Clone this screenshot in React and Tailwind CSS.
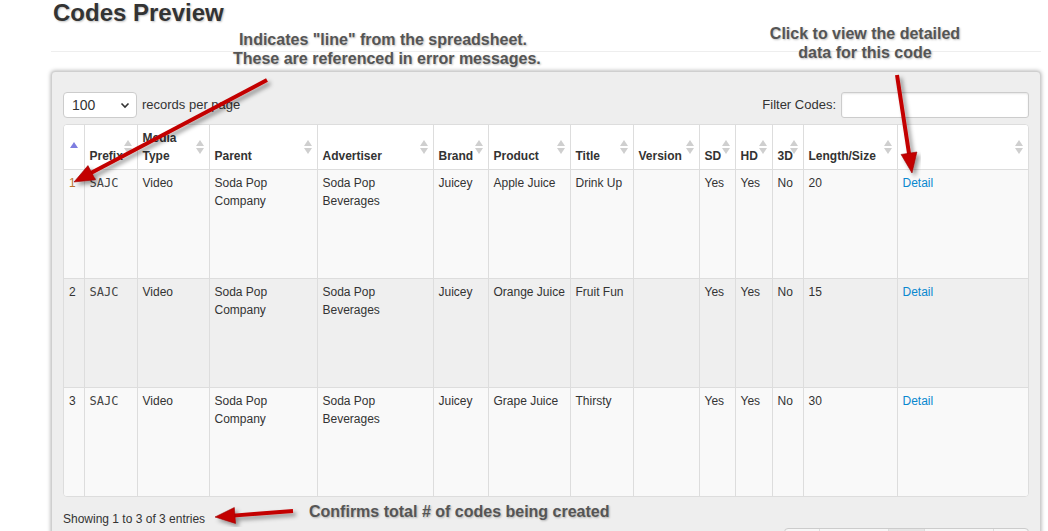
import React from "react";

// Column layout taken from the reference table
const columns = [
  { label: "", width: "w-[20px]" },
  { label: "Prefix", width: "w-[53px]" },
  { label: ["Media", "Type"], width: "w-[72px]" },
  { label: "Parent", width: "w-[108px]" },
  { label: "Advertiser", width: "w-[116px]" },
  { label: "Brand", width: "w-[55px]" },
  { label: "Product", width: "w-[82px]" },
  { label: "Title", width: "w-[63px]" },
  { label: "Version", width: "w-[66px]" },
  { label: "SD", width: "w-[36px]" },
  { label: "HD", width: "w-[37px]" },
  { label: "3D", width: "w-[31px]" },
  { label: "Length/Size", width: "w-[94px]" },
  { label: "", width: "w-[131px]" },
];

const rows = [
  { line: "1", product: "Apple Juice", title: "Drink Up", length: "20", bg: "bg-[#f9f9f9]" },
  { line: "2", product: "Orange Juice", title: "Fruit Fun", length: "15", bg: "bg-[#efefef]" },
  { line: "3", product: "Grape Juice", title: "Thirsty", length: "30", bg: "bg-[#f9f9f9]" },
];

const SortIcon = () => (
  <svg width="8" height="14" viewBox="0 0 8 14" className="absolute right-[5px] top-[15px]">
    <polygon points="0,6 4,0 8,6" fill="#cfcfcf" />
    <polygon points="0,8 8,8 4,14" fill="#cfcfcf" />
  </svg>
);

// red callout arrow, tip at (x2, y2)
const Arrow = ({ x1, y1, x2, y2 }) => {
  const dx = x2 - x1;
  const dy = y2 - y1;
  const len = Math.sqrt(dx * dx + dy * dy);
  const ux = dx / len;
  const uy = dy / len;
  const headLen = 20;
  const half = 8;
  const bx = x2 - ux * headLen;
  const by = y2 - uy * headLen;
  const px = -uy * half;
  const py = ux * half;
  return (
    <g filter="url(#arrowShadow)">
      <line x1={x1} y1={y1} x2={bx + ux * 2} y2={by + uy * 2} stroke="#c30000" strokeWidth="4" />
      <polygon
        points={`${x2},${y2} ${bx + px},${by + py} ${bx - px},${by - py}`}
        fill="#c30000"
        stroke="#9a0000"
        strokeWidth="0.6"
      />
    </g>
  );
};

const Callout = ({ className, lines }) => (
  <div
    className={`absolute text-center font-bold text-[16px] leading-[19px] text-[#555] whitespace-nowrap [text-shadow:1px_1px_2px_rgba(0,0,0,0.25)] ${className}`}
  >
    {lines.map((l) => (
      <div key={l}>{l}</div>
    ))}
  </div>
);

export default function App() {
  return (
    <div className="relative w-[1048px] h-[531px] overflow-hidden bg-white font-['Liberation_Sans',Arial,sans-serif] text-[#333]">
      <div className="ml-[51px] w-[990px]">
        <h3 className="pl-[2px] text-[24px] leading-[26px] font-bold text-[#333] [text-shadow:1px_1px_2px_rgba(0,0,0,0.25)]">
          Codes Preview
        </h3>
        <div className="mt-[25px] h-px bg-[#eeeeee]" />

        <div className="mt-[19px] rounded-[4px] border border-[#cfcfcf] bg-[#eeeeee] pt-[20px] px-[11px] shadow-[0_0_4px_rgba(0,0,0,0.35)]">
          {/* controls */}
          <div className="flex items-center justify-between h-[26px]">
            <div className="flex items-center">
              <div className="flex items-center justify-between w-[74px] h-[26px] rounded-[4px] border border-[#cccccc] bg-white pl-[8px] pr-[6px] text-[14px]">
                <span>100</span>
                <svg width="10" height="10" viewBox="0 0 10 10">
                  <path d="M1.5 3.5 L5 7 L8.5 3.5" fill="none" stroke="#333" strokeWidth="1.6" />
                </svg>
              </div>
              <span className="ml-[5px] text-[13px]">records per page</span>
            </div>
            <div className="flex items-center">
              <span className="text-[13px] mr-[5px]">Filter Codes:</span>
              <div className="w-[188px] h-[26px] rounded-[3px] border border-[#cccccc] bg-white shadow-[inset_0_1px_2px_rgba(0,0,0,0.1)]" />
            </div>
          </div>

          {/* table */}
          <div className="mt-[6px] rounded-[4px] border border-[#dddddd] overflow-hidden bg-white">
            <table className="w-full table-fixed border-collapse text-[12px] leading-[18px]">
              <colgroup>
                {columns.map((c, i) => (
                  <col key={i} className={c.width} />
                ))}
              </colgroup>
              <thead>
                <tr className="h-[44px] bg-white">
                  {columns.map((c, i) => (
                    <th
                      key={i}
                      className="relative align-bottom text-left font-bold px-[5px] pb-[4px] border-l border-[#dddddd] first:border-l-0"
                    >
                      {i === 0 ? (
                        <svg width="8" height="6" viewBox="0 0 8 6" className="absolute left-[6px] top-[17px]">
                          <polygon points="0,6 4,0 8,6" fill="#7d7de0" />
                        </svg>
                      ) : (
                        <>
                          {Array.isArray(c.label) ? (
                            <>
                              {c.label[0]}
                              <br />
                              {c.label[1]}
                            </>
                          ) : (
                            c.label
                          )}
                          <SortIcon />
                        </>
                      )}
                    </th>
                  ))}
                </tr>
              </thead>
              <tbody>
                {rows.map((r) => {
                  const cells = [
                    r.line,
                    "SAJC",
                    "Video",
                    ["Soda Pop", "Company"],
                    ["Soda Pop", "Beverages"],
                    "Juicey",
                    r.product,
                    r.title,
                    "",
                    "Yes",
                    "Yes",
                    "No",
                    r.length,
                    "Detail",
                  ];
                  return (
                    <tr key={r.line} className={`h-[109px] border-t border-[#dddddd] ${r.bg}`}>
                      {cells.map((v, i) => (
                        <td
                          key={i}
                          className={`align-top px-[5px] pt-[4px] whitespace-nowrap border-l border-[#dddddd] first:border-l-0 ${
                            i === 1 ? "font-['DejaVu_Sans_Mono',monospace] text-[12px] text-[#444]" : ""
                          } ${i === 13 ? "text-[#0a88cf]" : ""} ${i === 0 && r.line === "1" ? "text-[#b8742e]" : ""}`}
                        >
                          {Array.isArray(v) ? (
                            <>
                              <div>{v[0]}</div>
                              <div>{v[1]}</div>
                            </>
                          ) : (
                            v
                          )}
                        </td>
                      ))}
                    </tr>
                  );
                })}
              </tbody>
            </table>
          </div>

          {/* footer */}
          <div className="flex items-start justify-between">
            <div className="mt-[13px] text-[12px] leading-[18px]">Showing 1 to 3 of 3 entries</div>
            <div className="mt-[31px] flex h-[30px] rounded-[4px] border border-[#cccccc] bg-[#f7f7f7] overflow-hidden">
              <div className="w-[35px] border-r border-[#dddddd]" />
              <div className="w-[69px] border-r border-[#dddddd]" />
              <div className="w-[36px] border-r border-[#dddddd] bg-[#e6e6e6]" />
              <div className="w-[69px] border-r border-[#dddddd]" />
              <div className="w-[34px]" />
            </div>
          </div>
          <div className="h-[20px]" />
        </div>
      </div>

      {/* annotation overlays */}
      <Callout className="left-[233px] w-[300px] top-[30px]" lines={['Indicates "line" from the spreadsheet.', "These are referenced in error messages."]} />
      <Callout className="left-[765px] w-[200px] top-[24px]" lines={["Click to view the detailed", "data for this code"]} />
      <Callout className="left-[309px] top-[502px] text-left" lines={["Confirms total # of codes being created"]} />

      <svg width="1048" height="531" className="absolute left-0 top-0 pointer-events-none">
        <defs>
          <filter id="arrowShadow" x="-20%" y="-20%" width="140%" height="140%">
            <feDropShadow dx="3" dy="3" stdDeviation="2" floodColor="#000" floodOpacity="0.4" />
          </filter>
        </defs>
        <Arrow x1={267} y1={80} x2={74} y2={182} />
        <Arrow x1={897} y1={75} x2={912} y2={173} />
        <Arrow x1={293} y1={511} x2={215} y2={517} />
      </svg>
    </div>
  );
}
